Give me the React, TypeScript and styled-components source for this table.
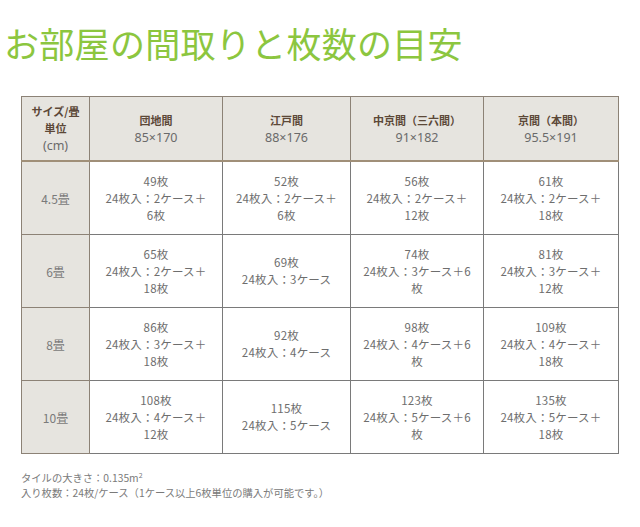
import React from "react";
import styled, { createGlobalStyle } from "styled-components";

const Global = createGlobalStyle`
  html, body { margin: 0; padding: 0; background: #fff; }
  body { font-family: "Noto Sans CJK JP", "Noto Sans", sans-serif; }
`;

const Page = styled.div`
  width: 640px;
  height: 527px;
  box-sizing: border-box;
  padding: 19px 0 0 0;
  display: flex;
  flex-direction: column;
`;

const Title = styled.h1`
  margin: 0 0 0 4px;
  font-family: "Noto Sans CJK JP", sans-serif;
  font-weight: 400;
  font-size: 35px;
  line-height: 48px;
  color: #8cc63f;
  letter-spacing: 0.3px;
`;

const Table = styled.table`
  margin: 29px 0 0 21px;
  border-collapse: collapse;
  width: 592px;
  table-layout: fixed;
  border: 1px solid #8c8276;
`;

const HeadCell = styled.th<{ $w: number }>`
  width: ${(p) => p.$w}px;
  height: 63px;
  background: #e6e4df;
  border: 1px solid #8c8276;
  border-bottom: 2px solid #a08f78;
  padding: 0;
  text-align: center;
  vertical-align: middle;
  font-weight: 400;
  font-size: 12px;
  line-height: 16px;
  color: #666;
`;

const HeadLabel = styled.div`
  font-weight: 700;
  font-size: 11px;
  color: #5c4838;
  line-height: 17px;
`;

const HeadSize = styled.div`
  font-family: "Noto Sans", "Noto Sans CJK JP", sans-serif;
  font-size: 12.5px;
  line-height: 17px;
  color: #6a6a6a;
`;

const RowHead = styled.th`
  background: #e6e4df;
  border: 1px solid #8c8276;
  border-top: none;
  font-weight: 400;
  font-size: 12px;
  color: #7a7a7a;
  text-align: center;
  vertical-align: middle;
  padding: 0;
`;

const Cell = styled.td`
  height: 72px;
  border: 1px solid #7a7a7a;
  border-top: none;
  text-align: center;
  vertical-align: middle;
  padding: 0 8px;
  font-size: 11.5px;
  line-height: 17px;
  color: #6e6e6e;
  letter-spacing: 0.2px;
`;

const Notes = styled.div`
  margin: 16px 0 0 21px;
  font-size: 10.3px;
  line-height: 15px;
  color: #7a7a7a;
`;

const Sup = styled.sup`
  font-size: 7px;
  vertical-align: top;
  position: relative;
  top: -2px;
`;

const cols = [
  { label: "団地間", size: "85×170", w: 132 },
  { label: "江戸間", size: "88×176", w: 127 },
  { label: "中京間（三六間）", size: "91×182", w: 132 },
  { label: "京間（本間）", size: "95.5×191", w: 134 },
];

const rows: { label: string; cells: string[][] }[] = [
  {
    label: "4.5畳",
    cells: [
      ["49枚", "24枚入：2ケース＋", "6枚"],
      ["52枚", "24枚入：2ケース＋", "6枚"],
      ["56枚", "24枚入：2ケース＋", "12枚"],
      ["61枚", "24枚入：2ケース＋", "18枚"],
    ],
  },
  {
    label: "6畳",
    cells: [
      ["65枚", "24枚入：2ケース＋", "18枚"],
      ["69枚", "24枚入：3ケース"],
      ["74枚", "24枚入：3ケース＋6", "枚"],
      ["81枚", "24枚入：3ケース＋", "12枚"],
    ],
  },
  {
    label: "8畳",
    cells: [
      ["86枚", "24枚入：3ケース＋", "18枚"],
      ["92枚", "24枚入：4ケース"],
      ["98枚", "24枚入：4ケース＋6", "枚"],
      ["109枚", "24枚入：4ケース＋", "18枚"],
    ],
  },
  {
    label: "10畳",
    cells: [
      ["108枚", "24枚入：4ケース＋", "12枚"],
      ["115枚", "24枚入：5ケース"],
      ["123枚", "24枚入：5ケース＋6", "枚"],
      ["135枚", "24枚入：5ケース＋", "18枚"],
    ],
  },
];

export default function App() {
  return (
    <>
      <Global />
      <Page>
        <Title>お部屋の間取りと枚数の目安</Title>
        <Table>
          <thead>
            <tr>
              <HeadCell $w={67}>
                <HeadLabel>サイズ/畳</HeadLabel>
                <HeadLabel>単位</HeadLabel>
                <HeadSize>(cm)</HeadSize>
              </HeadCell>
              {cols.map((c) => (
                <HeadCell key={c.label} $w={c.w}>
                  <HeadLabel>{c.label}</HeadLabel>
                  <HeadSize>{c.size}</HeadSize>
                </HeadCell>
              ))}
            </tr>
          </thead>
          <tbody>
            {rows.map((r) => (
              <tr key={r.label}>
                <RowHead>{r.label}</RowHead>
                {r.cells.map((lines, i) => (
                  <Cell key={i}>
                    {lines.map((l, j) => (
                      <div key={j}>{l}</div>
                    ))}
                  </Cell>
                ))}
              </tr>
            ))}
          </tbody>
        </Table>
        <Notes>
          <div>
            タイルの大きさ：0.135m<Sup>2</Sup>
          </div>
          <div>入り枚数：24枚/ケース（1ケース以上6枚単位の購入が可能です。）</div>
        </Notes>
      </Page>
    </>
  );
}
